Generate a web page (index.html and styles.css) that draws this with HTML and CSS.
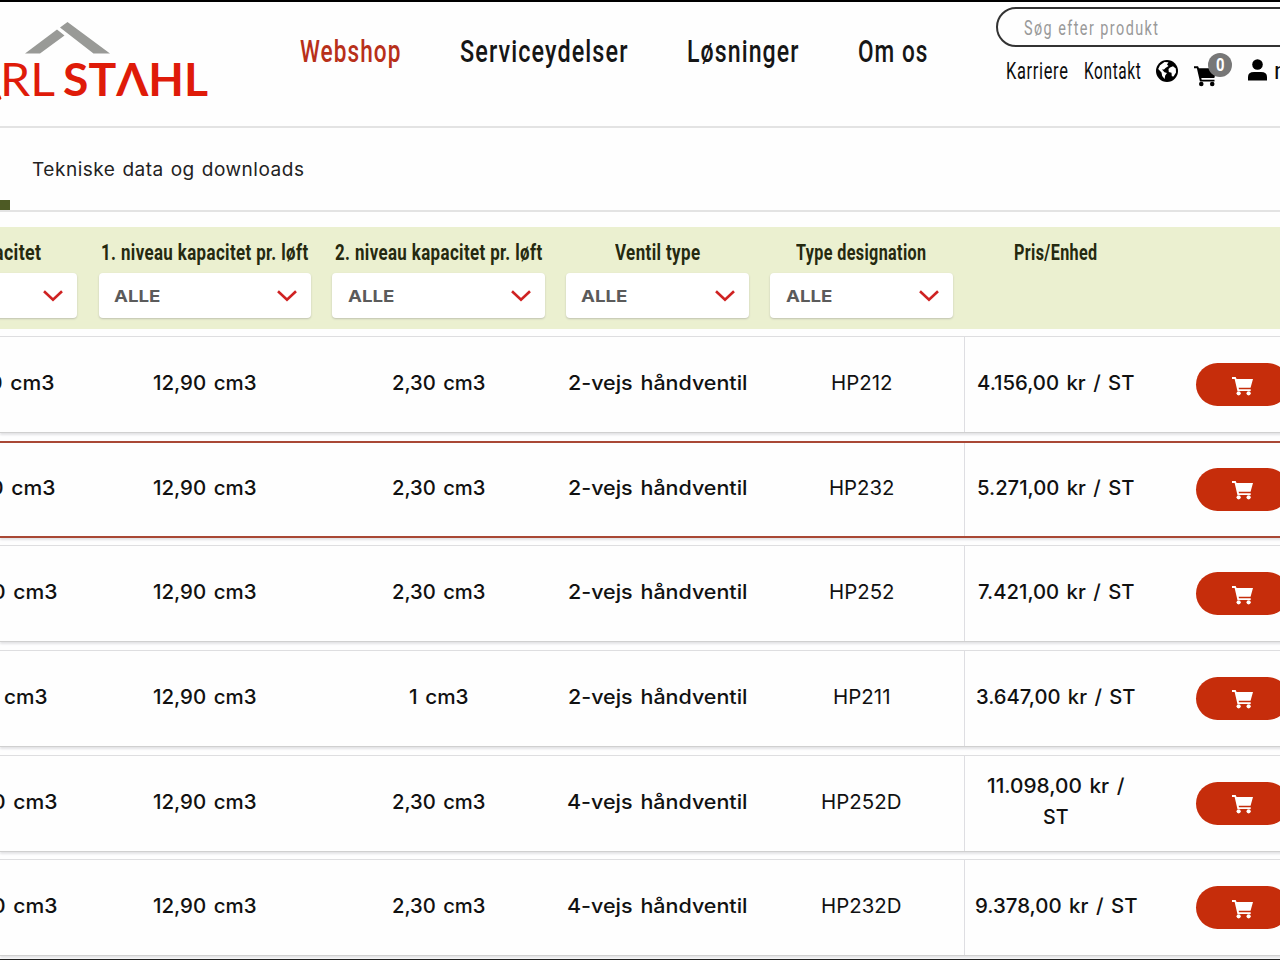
FILE: index.html
```html
<!DOCTYPE html>
<html lang="da">
<head>
<meta charset="utf-8">
<title>Carl Stahl Webshop</title>
<link rel="stylesheet" href="styles.css">
</head>
<body>
<svg class="defs" width="0" height="0">
  <symbol id="cart" viewBox="0 0 24 22">
    <path d="M0 0.8h4.2l1 2.200H24l-2.800 10H7.600l.4 1.800h13.400v2H6.200L3 3H0z"/>
    <circle cx="7.600" cy="19.400" r="2.400"/><circle cx="19" cy="19.400" r="2.400"/>
  </symbol>
  <symbol id="chevron" viewBox="0 0 20 12">
    <path d="M1 1.200L10 9.800L19 1.200" fill="none" stroke="#cf2222" stroke-width="2.600"/>
  </symbol>
</svg>
<div class="page">
  <header class="header">
    <svg class="logo" width="220" height="100" viewBox="0 0 220 100">
      <path fill="#999a97" d="M25 51.500L57 27.500L64.500 33.500L40 51.500zM60 25.500L67.500 20L110 51.500H93.500z"/>
      <g fill="#df1b09">
        <path d="M0 93l1.500 3.500L0 98z"/>
        <text class="logo-thin" x="0" y="94" textLength="55" lengthAdjust="spacingAndGlyphs">RL</text>
        <text class="logo-bold" x="63" y="94" textLength="145" lengthAdjust="spacingAndGlyphs">STΛHL</text>
      </g>
    </svg>
    <nav class="nav">
      <a class="nav-item active" data-w="101">Webshop</a>
      <a class="nav-item" data-w="168">Serviceydelser</a>
      <a class="nav-item" data-w="112">Løsninger</a>
      <a class="nav-item" data-w="70">Om os</a>
    </nav>
    <div class="tools">
      <div class="search"><span data-w="135">Søg efter produkt</span></div>
      <div class="links">
        <a class="karriere" data-w="62">Karriere</a>
        <a class="kontakt" data-w="57">Kontakt</a>
        <svg class="globe" width="22" height="22" viewBox="0 0 22 22">
          <circle cx="11" cy="11" r="11"/>
          <path fill="#fff" d="M4 5.200L8.500 2L12.500 2.200L11 4.500L12.500 6L9.500 8L8 9.600L6 9.500L8.500 12.200L11 13L9.200 15.500L8.600 19L6.200 16L5.500 12.500L2.200 9z"/>
          <path fill="#fff" d="M14 7.500L17 6.200L19.800 8.500L20 12.500L17.500 16.500L15.800 16.200L15.500 12.800L12.800 12L12.500 9z"/>
        </svg>
        <div class="basket">
          <svg width="23" height="22"><use href="#cart"/></svg>
          <span class="badge"><span data-w="8">0</span></span>
        </div>
        <svg class="user" width="19" height="22" viewBox="0 0 19 22"><circle cx="9.500" cy="5.500" r="5.300"/><path d="M0 21.500v-3.500q0-5 6-5h7q6 0 6 5v3.500z"/></svg>
        <span class="account">m</span>
      </div>
    </div>
  </header>

  <div class="tabs">
    <div class="tab-active"></div>
    <a class="tab" data-w="272">Tekniske data og downloads</a>
  </div>

  <div class="row filters">
    <div class="cell first"><b class="title" data-w="47">acitet</b><div class="select"><svg width="20" height="12"><use href="#chevron"/></svg></div></div>
    <div class="cell"><b class="title" data-w="207">1. niveau kapacitet pr. løft</b><div class="select"><span data-w="46">ALLE</span><svg width="20" height="12"><use href="#chevron"/></svg></div></div>
    <div class="cell"><b class="title" data-w="207">2. niveau kapacitet pr. løft</b><div class="select"><span data-w="46">ALLE</span><svg width="20" height="12"><use href="#chevron"/></svg></div></div>
    <div class="cell"><b class="title" data-w="85">Ventil type</b><div class="select"><span data-w="46">ALLE</span><svg width="20" height="12"><use href="#chevron"/></svg></div></div>
    <div class="cell"><b class="title" data-w="130">Type designation</b><div class="select"><span data-w="46">ALLE</span><svg width="20" height="12"><use href="#chevron"/></svg></div></div>
    <div class="cell"><b class="title" data-w="83">Pris/Enhed</b></div>
    <div class="cell"></div>
  </div>

  <div class="products">
    <div class="row product">
      <div class="cell first end-54"><span data-w="65">0 cm3</span></div>
      <div class="cell"><span data-w="103">12,90 cm3</span></div>
      <div class="cell"><span data-w="93">2,30 cm3</span></div>
      <div class="cell"><span data-w="179">2-vejs håndventil</span></div>
      <div class="cell type"><span data-w="61">HP212</span></div>
      <div class="cell price"><span data-w="157">4.156,00 kr / ST</span></div>
      <div class="cell action"><button class="buy"><svg width="21" height="20"><use href="#cart"/></svg></button></div>
    </div>
    <div class="row product selected">
      <div class="cell first end-55"><span data-w="65">0 cm3</span></div>
      <div class="cell"><span data-w="103">12,90 cm3</span></div>
      <div class="cell"><span data-w="93">2,30 cm3</span></div>
      <div class="cell"><span data-w="179">2-vejs håndventil</span></div>
      <div class="cell type"><span data-w="65">HP232</span></div>
      <div class="cell price"><span data-w="157">5.271,00 kr / ST</span></div>
      <div class="cell action"><button class="buy"><svg width="21" height="20"><use href="#cart"/></svg></button></div>
    </div>
    <div class="row product">
      <div class="cell first end-57"><span data-w="65">0 cm3</span></div>
      <div class="cell"><span data-w="103">12,90 cm3</span></div>
      <div class="cell"><span data-w="93">2,30 cm3</span></div>
      <div class="cell"><span data-w="179">2-vejs håndventil</span></div>
      <div class="cell type"><span data-w="65">HP252</span></div>
      <div class="cell price"><span data-w="156">7.421,00 kr / ST</span></div>
      <div class="cell action"><button class="buy"><svg width="21" height="20"><use href="#cart"/></svg></button></div>
    </div>
    <div class="row product">
      <div class="cell first end-47"><span data-w="43">cm3</span></div>
      <div class="cell"><span data-w="103">12,90 cm3</span></div>
      <div class="cell"><span data-w="59">1 cm3</span></div>
      <div class="cell"><span data-w="179">2-vejs håndventil</span></div>
      <div class="cell type"><span data-w="57">HP211</span></div>
      <div class="cell price"><span data-w="159">3.647,00 kr / ST</span></div>
      <div class="cell action"><button class="buy"><svg width="21" height="20"><use href="#cart"/></svg></button></div>
    </div>
    <div class="row product">
      <div class="cell first end-57"><span data-w="65">0 cm3</span></div>
      <div class="cell"><span data-w="103">12,90 cm3</span></div>
      <div class="cell"><span data-w="93">2,30 cm3</span></div>
      <div class="cell"><span data-w="180">4-vejs håndventil</span></div>
      <div class="cell type"><span data-w="80">HP252D</span></div>
      <div class="cell price"><span data-w="137">11.098,00 kr /</span><span data-w="25">ST</span></div>
      <div class="cell action"><button class="buy"><svg width="21" height="20"><use href="#cart"/></svg></button></div>
    </div>
    <div class="row product">
      <div class="cell first end-57"><span data-w="65">0 cm3</span></div>
      <div class="cell"><span data-w="103">12,90 cm3</span></div>
      <div class="cell"><span data-w="93">2,30 cm3</span></div>
      <div class="cell"><span data-w="180">4-vejs håndventil</span></div>
      <div class="cell type"><span data-w="80">HP232D</span></div>
      <div class="cell price"><span data-w="162">9.378,00 kr / ST</span></div>
      <div class="cell action"><button class="buy"><svg width="21" height="20"><use href="#cart"/></svg></button></div>
    </div>
  </div>
</div>
<script src="fit.js"></script>
</body>
</html>
```
FILE: fit.js
```js
document.querySelectorAll('[data-w]').forEach(function (el) {
  var want = Number(el.dataset.w) + 0.5;
  var natural = el.getBoundingClientRect().width;
  el.style.width = natural + 'px';
  el.style.marginRight = (want - natural) + 'px';
  el.style.transform = 'scaleX(' + want / natural + ')';
});
```
FILE: styles.css
```css
* { box-sizing: border-box; }
body { margin: 0; background: #fff; color: #111; font-family: Inter, "Liberation Sans", sans-serif; overflow: hidden; }
.defs { position: absolute; }
.page { width: 1280px; height: 960px; overflow: hidden; border-top: 2px solid #000; border-bottom: 1px solid #222; background: #fefefe; }
[data-w] { display: inline-block; flex: none; white-space: nowrap; transform-origin: 0 50%; }

.header { display: flex; height: 126px; border-bottom: 2px solid #e3e3e3; }
.logo { flex: none; display: block; }
.logo-thin { font: 400 46px Lato, sans-serif; }
.logo-bold { font: 700 46px Lato, sans-serif; }
.nav { display: flex; flex: none; gap: 58.500px; width: 776px; padding: 30px 0 0 79.500px; }
.nav-item { font: 500 32px/38px Roboto, sans-serif; letter-spacing: 1.5px; color: #161616; }
.nav-item.active { color: #b8301a; }
.tools { flex: none; width: 300px; padding-top: 5px; }
.search { width: 320px; height: 40px; border: 2px solid #333; border-radius: 20px; padding: 6px 0 0 26px; font: 400 20px/26px Roboto, sans-serif; letter-spacing: 2px; color: #999; }
.links { display: flex; height: 50px; padding: 9px 0 0 9.500px; font: 400 24px/30px Roboto, sans-serif; letter-spacing: 1px; color: #0c0c0c; }
.kontakt { margin-left: 15.500px; }
.globe { flex: none; margin: 4px 0 0 15px; }
.basket { position: relative; flex: none; width: 38px; height: 40px; margin-left: 16px; padding-top: 9px; }
.basket svg { display: block; }
.badge { position: absolute; left: 14px; top: -3px; width: 24px; height: 24px; border-radius: 50%; background: #777; color: #fff; font: 700 19px/24px Roboto, sans-serif; letter-spacing: 0; text-align: center; }
.user { flex: none; margin: 3px 0 0 16px; }
.account { margin-left: 7px; }

.tabs { display: flex; height: 84px; border-bottom: 2px solid #e3e3e3; }
.tab-active { flex: none; align-self: flex-end; width: 10px; height: 10px; background: #4d5a24; }
.tab { padding-top: 27px; margin-left: 22px; font-size: 18.5px; line-height: 28px; letter-spacing: .5px; word-spacing: 1px; color: #222; }

.row { display: grid; grid-template-columns: 88px 233.5px 233.5px 204.5px 204px 184px 140px; }
.filters { height: 102px; margin-top: 15px; background: #ebf0d0; padding-top: 12px; }
.filters .cell { display: flex; flex-direction: column; align-items: center; }
.filters .first { align-items: flex-end; padding-right: 11px; }
.title { font: 700 22px/28px Roboto, sans-serif; letter-spacing: .5px; color: #25290f; }
.first .title { translate: -36px 0; }
.select { display: flex; align-items: center; justify-content: space-between; align-self: stretch; height: 45px; margin: 6px 10.5px 0; padding: 0 14px 0 15.500px; background: #fff; border-radius: 4px; box-shadow: 0 1px 2px #bfc2b0; font-size: 16.5px; font-weight: 700; color: #5b5b5b; }
.first .select { width: 100px; align-self: flex-end; margin: 6px 0 0; justify-content: flex-end; }

.products { display: grid; grid-auto-rows: 97px; row-gap: 7.65px; padding-top: 7px; }
.product { border-top: 1px solid #dedee0; border-bottom: 1px solid #d0d0d0; box-shadow: 0 2px 2px #e4e4e6; background: #fefefe; font-size: 20px; font-weight: 500; line-height: 31px; word-spacing: 2px; }
.product.selected { border-top: 2px solid #a94835; border-bottom: 2px solid #a94835; }
.product .cell { display: flex; flex-direction: column; align-items: center; justify-content: center; padding-bottom: 2px; }
.product .type { font-weight: 400; }
.product .first { align-items: flex-end; }
.product .end-54 { padding-right: 33.5px; }
.product .end-55 { padding-right: 32.5px; }
.product .end-57 { padding-right: 31px; }
.product .end-47 { padding-right: 40.5px; }
.product .price { border-left: 1px solid #dedee2; }
.product .action { align-items: flex-start; padding: 0 0 0 48px; }
.buy { display: flex; align-items: center; justify-content: center; width: 93px; height: 43px; border: 0; padding: 2px 0 0; border-radius: 22px; background: #c62d0b; fill: #fff; }
```
